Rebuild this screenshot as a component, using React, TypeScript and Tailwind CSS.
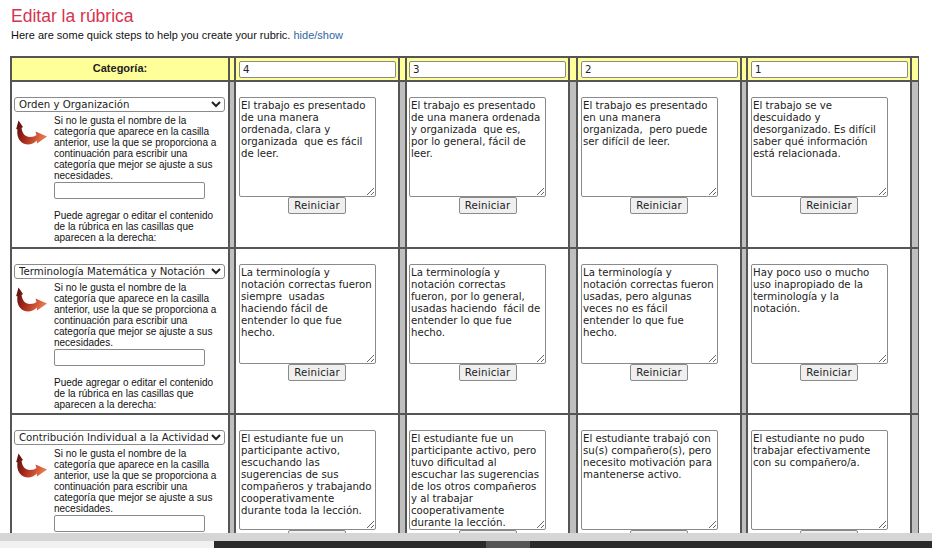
const levels = ['4', '3', '2', '1']

const rows = [
  {
    category: 'Orden y Organización',
    texts: [
      'El trabajo es presentado\nde una manera\nordenada, clara y\norganizada  que es fácil\nde leer.',
      'El trabajo es presentado\nde una manera ordenada\ny organizada  que es,\npor lo general, fácil de\nleer.',
      'El trabajo es presentado\nen una manera\norganizada,  pero puede\nser difícil de leer.',
      'El trabajo se ve\ndescuidado y\ndesorganizado. Es difícil\nsaber qué información\nestá relacionada.',
    ],
  },
  {
    category: 'Terminología Matemática y Notación',
    texts: [
      'La terminología y\nnotación correctas fueron\nsiempre  usadas\nhaciendo fácil de\nentender lo que fue\nhecho.',
      'La terminología y\nnotación correctas\nfueron, por lo general,\nusadas haciendo  fácil de\nentender lo que fue\nhecho.',
      'La terminología y\nnotación correctas fueron\nusadas, pero algunas\nveces no es fácil\nentender lo que fue\nhecho.',
      'Hay poco uso o mucho\nuso inapropiado de la\nterminología y la\nnotación.',
    ],
  },
  {
    category: 'Contribución Individual a la Actividad',
    texts: [
      'El estudiante fue un\nparticipante activo,\nescuchando las\nsugerencias de sus\ncompañeros y trabajando\ncooperativamente\ndurante toda la lección.',
      'El estudiante fue un\nparticipante activo, pero\ntuvo dificultad al\nescuchar las sugerencias\nde los otros compañeros\ny al trabajar\ncooperativamente\ndurante la lección.',
      'El estudiante trabajó con\nsu(s) compañero(s), pero\nnecesito motivación para\nmantenerse activo.',
      'El estudiante no pudo\ntrabajar efectivamente\ncon su compañero/a.',
    ],
  },
]

const columns = 'grid grid-cols-[216px_8px_162px_9px_161px_10px_162px_8px_162px_9px]'

function Arrow() {
  return (
    <svg width="32" height="28" viewBox="0 0 32 28" className="ml-[2px] mt-[5px] shrink-0">
      <defs>
        <linearGradient id="arrowFill" x1="0" y1="0" x2="1" y2="0.3">
          <stop offset="0" stopColor="#4a0d0d" />
          <stop offset="0.45" stopColor="#a5281a" />
          <stop offset="1" stopColor="#e8734a" />
        </linearGradient>
      </defs>
      <path
        d="M2.5 0.5 L7 7 L5.6 8 C6 13 9 17 14 17 C17 17 19 16.2 20.5 15 L19.5 11.5 L31 16.5 L21 23.5 L20.8 20.6 C17 24.5 12 25.5 7.5 23.5 C2.5 21 0.5 15 1.5 9.5 L0.2 9 Z"
        fill="url(#arrowFill)"
      />
    </svg>
  )
}

function Separator({ header, last }: { header?: boolean; last?: boolean }) {
  return (
    <div
      className={`border-l-2 border-[#555] ${last ? 'border-r' : 'border-r-2'} ${header ? 'bg-[#ffff99]' : 'bg-[#bfbfbf]'}`}
    />
  )
}

function CategoryCell({ category }: { category: string }) {
  return (
    <div className="pt-[15px] pl-[2px] pr-[1px] font-['Liberation_Sans',sans-serif] text-[10px] leading-[11px] text-[#111]">
      <select
        defaultValue={category}
        className="block h-[15px] w-[211px] rounded-[3px] border border-[#8a8a8a] bg-white pl-0 font-['DejaVu_Sans',sans-serif] text-[10.2px] leading-[13px] text-[#222]"
      >
        <option>{category}</option>
      </select>
      <div className="mt-[3px] flex">
        <Arrow />
        <div className="ml-[6px] w-[164px]">
          <p>
            Si no le gusta el nombre de la categoría que aparece en la casilla anterior, use la que se
            proporciona a continuación para escribir una categoría que mejor se ajuste a sus necesidades.
          </p>
          <input
            type="text"
            className="mt-[1px] block h-[17px] w-[151px] rounded-[2px] border border-[#8a8a8a] bg-white"
          />
          <p className="mt-[11px]">
            Puede agregar o editar el contenido de la rúbrica en las casillas que aparecen a la derecha:
          </p>
        </div>
      </div>
    </div>
  )
}

function TextCell({ text, inset }: { text: string; inset: string }) {
  return (
    <div className="pt-[15px]">
      <textarea
        defaultValue={text}
        className={`block h-[100px] w-[137px] rounded-[2px] border border-[#8a8a8a] bg-white px-[1px] pb-0 pt-[2px] font-['DejaVu_Sans',sans-serif] text-[10.2px] leading-[12px] text-[#222] ${inset}`}
      />
      <div className="flex justify-center">
        <button
          type="button"
          className="h-[17px] w-[58px] rounded-[2px] border border-[#8a8a8a] bg-[#efefef] font-['DejaVu_Sans',sans-serif] text-[10.2px] leading-[15px] tracking-[0.2px] text-[#222]"
        >
          Reiniciar
        </button>
      </div>
    </div>
  )
}

const insets = ['ml-[3px]', 'ml-[2px]', 'ml-[3px]', 'ml-[3px]']

export default function App() {
  return (
    <div className="flex h-[548px] w-[932px] flex-col overflow-hidden bg-white font-['Liberation_Sans',sans-serif]">
      <div className="min-h-0 flex-1 overflow-hidden pl-[10px] pt-[5px]">
        <h1 className="ml-[1px] mt-[1px] text-[17.5px] leading-[21px] text-[#d8324f]">Editar la rúbrica</h1>
        <p className="ml-[1px] mt-[1px] text-[11px] leading-[14px] text-[#111]">
          Here are some quick steps to help you create your rubric.{' '}
          <a href="#" className="text-[#2f66a3]">
            hide/show
          </a>
        </p>

        <div className="mt-[14px] w-[909px] border-l-2 border-t-2 border-[#555]">
          <div className={`${columns} h-[24px] border-b-2 border-[#555] bg-[#ffff99]`}>
            <div className="text-center text-[11px] font-bold leading-[21px] text-[#222]">Categoría:</div>
            {levels.map((level, i) => (
              <div key={level} className="contents">
                <Separator header />
                <div className="pt-[3px]">
                  <input
                    type="text"
                    defaultValue={level}
                    className={`block h-[17px] w-[157px] rounded-[2px] border border-[#8a8a8a] bg-white pl-[3px] font-['DejaVu_Sans',sans-serif] text-[10.2px] text-[#222] ${insets[i]}`}
                  />
                </div>
              </div>
            ))}
            <Separator header last />
          </div>

          {rows.map((row) => (
            <div key={row.category} className={`${columns} h-[166.5px] border-b-2 border-[#555]`}>
              <CategoryCell category={row.category} />
              {row.texts.map((text, i) => (
                <div key={i} className="contents">
                  <Separator />
                  <TextCell text={text} inset={insets[i]} />
                </div>
              ))}
              <Separator last />
            </div>
          ))}
        </div>
      </div>

      <div className="h-[8px] shrink-0 bg-[#d6d6d6]" />
      <div className="flex h-[7px] shrink-0">
        <div className="w-[214px] bg-[#f1f1f1]" />
        <div className="w-[272px] bg-[#2b2b2b]" />
        <div className="w-[44px] bg-[#555]" />
        <div className="flex-1 bg-[#2b2b2b]" />
      </div>
    </div>
  )
}
